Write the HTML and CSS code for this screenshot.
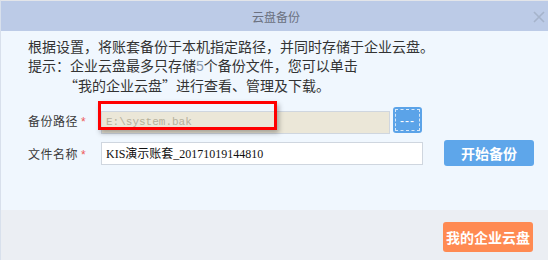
FILE: index.html
```html
<!DOCTYPE html>
<html lang="zh-CN">
<head>
  <meta charset="UTF-8">
  <title>云盘备份</title>
  <link rel="stylesheet" href="styles.css">
</head>
<body>
  <div class="dialog">
    <!-- Title bar -->
    <div class="titlebar">
      <span class="title">云盘备份</span>
      <svg class="close" width="12" height="12" viewBox="0 0 12 12">
        <path d="M1 1 L11 11 M11 1 L1 11" stroke="#a6b4cb" stroke-width="1.6" fill="none"/>
      </svg>
    </div>

    <!-- Content -->
    <div class="content">
      <div class="intro">
        <p>根据设置，将账套备份于本机指定路径，并同时存储于企业云盘。</p>
        <p>提示：企业云盘最多只存储<span class="num">5</span>个备份文件，您可以单击</p>
        <p class="indent">“我的企业云盘”进行查看、管理及下载。</p>
      </div>

      <div class="form">
        <div class="row">
          <label class="label">备份路径<span class="star">*</span></label>
          <div class="field">
            <input class="input path" type="text" value="E:\system.bak" readonly>
            <span class="mark"></span>
          </div>
          <button class="browse"><span class="browse-inner">---</span></button>
        </div>
        <div class="row">
          <label class="label">文件名称<span class="star">*</span></label>
          <input class="input name" type="text" value="KIS演示账套_20171019144810">
          <button class="btn start">开始备份</button>
        </div>
      </div>
    </div>

    <!-- Footer -->
    <div class="footer">
      <button class="btn cloud">我的企业云盘</button>
    </div>
  </div>
</body>
</html>
```

FILE: styles.css
```css
body {
  margin: 0;
  font-family: "Noto Sans CJK SC", "Liberation Sans", sans-serif;
  background: #ffffff;
}

.dialog {
  width: 548px;
  height: 260px;
  box-sizing: border-box;
  border-top: 1px solid #e3e5e9;
  border-left: 1px solid #d8e0ec;
  display: flex;
  flex-direction: column;
  overflow: hidden;
}

.titlebar {
  position: relative;
  height: 30px;
  background: #bccbe7;
  display: flex;
  justify-content: center;
  align-items: center;
}

.title {
  font-size: 12px;
  color: #6b7180;
  margin-left: 3px;
}

.close {
  position: absolute;
  right: 3px;
  top: 10px;
}

.content {
  height: 179px;
  background: #f0f7fe;
  padding: 6px 0 0 27px;
  box-sizing: border-box;
}

.intro p {
  margin: 0;
  font-size: 14px;
  line-height: 19px;
  color: #333333;
  white-space: nowrap;
}

.intro .num {
  color: #8a9bb0;
  font-family: "Liberation Sans", sans-serif;
}

.intro .indent {
  padding-left: 36px;
}

.form {
  margin-top: 12px;
  display: flex;
  flex-direction: column;
  gap: 7px;
}

.row {
  display: flex;
  align-items: center;
  height: 26px;
}

.label {
  width: 73px;
  font-size: 12px;
  letter-spacing: 0.5px;
  color: #3a3a3a;
  white-space: nowrap;
}

.star {
  color: #ee5a5a;
  font-size: 12px;
  margin-left: 3px;
  font-family: "Liberation Sans", sans-serif;
}

.input {
  height: 23px;
  box-sizing: border-box;
  border: 1px solid #cfd6df;
  padding: 0 4px;
  outline: none;
}

.field {
  position: relative;
}

.path {
  width: 289px;
  background: #ebe7d8;
  color: #b6b19c;
  font-family: "Liberation Mono", monospace;
  font-size: 11px;
}

.mark {
  position: absolute;
  left: -3px;
  top: -5px;
  width: 179px;
  height: 29px;
  box-sizing: border-box;
  border: 3px solid #ff0000;
  box-shadow: 2px 3px 5px rgba(0, 0, 0, 0.3);
}

.name {
  width: 322px;
  background: #ffffff;
  color: #111111;
  font-family: "Liberation Serif", "Noto Sans CJK SC", serif;
  font-size: 12px;
}

.browse {
  margin-left: 3px;
  width: 29px;
  height: 26px;
  padding: 2px;
  border: none;
  border-radius: 3px;
  background: #5ba3e8;
  display: flex;
}

.browse-inner {
  flex: 1;
  border: 1px dashed rgba(255, 255, 255, 0.75);
  color: #ffffff;
  font-family: "Liberation Sans", sans-serif;
  font-size: 12px;
  line-height: 22px;
  letter-spacing: 1px;
  text-align: center;
}

.btn {
  border: none;
  border-radius: 3px;
  color: #ffffff;
  font-family: "Noto Sans CJK SC", sans-serif;
  font-weight: bold;
  font-size: 14px;
  padding: 0;
}

.start {
  margin-left: 21px;
  width: 90px;
  height: 26px;
  background: #5ea6ea;
}

.footer {
  flex: 1;
  background: #ebeef3;
  display: flex;
  justify-content: flex-end;
  align-items: flex-start;
  padding: 12px 15px 0 0;
}

.cloud {
  width: 90px;
  height: 30px;
  background: #ff8a52;
  font-size: 14px;
}
```
